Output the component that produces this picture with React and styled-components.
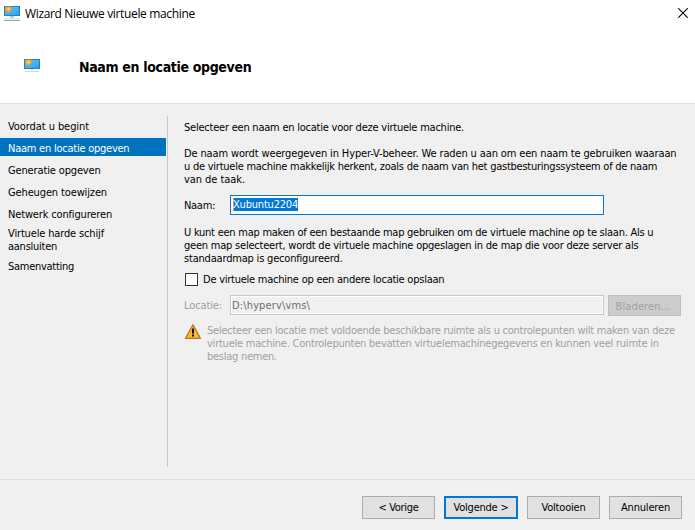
import React from 'react';
import styled, { createGlobalStyle } from 'styled-components';

const Global = createGlobalStyle`
  * { box-sizing: border-box; }
  body {
    margin: 0;
    background: #f0f0f0;
    color: #000;
    font: 11px/13px "DejaVu Sans Condensed", "DejaVu Sans", sans-serif;
    font-stretch: condensed;
    overflow: hidden;
  }
`;

const Window = styled.div`
  display: flex;
  flex-direction: column;
  width: 695px;
  height: 530px;
  background: #f0f0f0;
`;

const Top = styled.header`
  flex: none;
  height: 104px;
  background: #fff;
  border-bottom: 1px solid #dfdfdf;
`;

const TitleBar = styled.div`
  display: flex;
  height: 28px;
  padding: 0 7px 0 4px;
`;

const Caption = styled.span`
  flex: 1;
  margin: 5px 0 0 5px;
  font: 12px/17px "Open Sans", "Noto Sans", sans-serif;
  letter-spacing: -0.35px;
  white-space: nowrap;
`;

const TitleIcon = styled.svg`
  display: block;
  flex: none;
  width: 16px;
  height: 16px;
  margin-top: 5px;
`;

const CloseIcon = styled.svg`
  display: block;
  width: 10px;
  height: 10px;
  margin-top: 8px;
`;

const Heading = styled.div`
  display: flex;
  height: 75px;
  padding: 30px 0 0 24px;
`;

const HeadingIcon = styled.svg`
  display: block;
  width: 16px;
  height: 16px;
`;

const HeadingText = styled.h1`
  margin: 0 0 0 39px;
  font: bold 14px/18px "DejaVu Sans Condensed", "DejaVu Sans", sans-serif;
  font-stretch: condensed;
  letter-spacing: -0.34px;
  white-space: nowrap;
`;

const Body = styled.main`
  display: flex;
  height: 376px;
  border-bottom: 1px solid #dfdfdf;
`;

const Steps = styled.nav`
  width: 168px;
  height: 351px;
  margin-top: 12px;
  border-right: 1px solid #c8c8c8;
`;

const Step = styled.div`
  width: 166px;
  height: ${(p) => p.$height || 22}px;
  padding: ${(p) => p.$top ?? 4}px 0 0 8px;
`;

const ActiveStep = styled(Step)`
  height: 18px;
  margin-bottom: 4px;
  background: #0072c0;
  color: #fff;
`;

const Line = styled.span`
  display: block;
  height: 13px;
  letter-spacing: ${(p) => p.$track || 0}px;
  white-space: pre;
`;

const Form = styled.section`
  flex: none;
  width: 513px;
  padding: 17px 0 0 16px;
`;

const Paragraph = styled.p`
  margin: 0 0 ${(p) => p.$after || 0}px;
`;

const FieldRow = styled.div`
  display: flex;
  height: ${(p) => p.$height}px;
  color: ${(p) => (p.$disabled ? '#a0a0a0' : '#000')};
`;

const FieldLabel = styled.label`
  flex: none;
  width: 46px;
  padding-top: 4px;
`;

const Field = styled.div`
  display: flex;
  flex: none;
  align-items: flex-start;
  width: 374px;
  height: 20px;
  padding: 2px;
  border: 1px solid #0078d7;
  background: #fff;
`;

const DisabledField = styled(Field)`
  padding: 3px 1px 0;
  border-color: #c6c6c6;
  background: #f0f0f0;
  box-shadow: inset 0 0 0 1px #fff;
  color: #6d6d6d;
`;

const Selection = styled.span`
  width: 65px;
  height: 13px;
  background: #0078d7;
  box-shadow: inset 1px 0 0 #ff8728;
  color: #fff;
`;

const CheckRow = styled.label`
  display: flex;
  height: 22px;
  padding-left: 1px;
`;

const CheckBox = styled.span`
  width: 13px;
  height: 13px;
  margin: 0 5px 0 0;
  border: 1px solid #333;
  background: #fff;
`;

const Warning = styled.div`
  display: flex;
  color: #a0a0a0;
`;

const WarningIcon = styled.svg`
  display: block;
  flex: none;
  width: 18px;
  height: 17px;
  margin: -1px 5px 0 0;
`;

const Footer = styled.footer`
  display: flex;
  flex: 1;
  justify-content: flex-end;
  gap: 9px;
  padding: 16px 13px 0 0;
`;

const Button = styled.button`
  display: flex;
  flex: none;
  justify-content: center;
  width: ${(p) => (p.$primary ? 74 : 73)}px;
  height: 23px;
  padding: ${(p) => (p.$primary ? 3 : 4)}px 0 0;
  border: ${(p) => (p.$primary ? '2px solid #0078d7' : '1px solid #adadad')};
  background: #e1e1e1;
  color: #000;
  font: inherit;
`;

const BrowseButton = styled(Button)`
  height: 21px;
  margin-left: 4px;
  padding-right: 3px;
  border-color: #bfbfbf;
  background: #ccc;
  color: #a0a0a0;
`;

const Flare = () => (
  <>
    <path
      d="M4.5.4l1 1.6 1.9-.7-.6 1.9 1.7 1-1.7 1 .6 1.9-1.9-.6-1 1.6-1-1.6-1.9.6.6-1.9-1.7-1 1.7-1-.6-1.9 1.9.7z"
      fill="#f5a51d"
    />
    <circle cx="4.5" cy="4.2" r="1.4" fill="#ffcf60" />
  </>
);

const Screen = ({ id }) => (
  <>
    <defs>
      <linearGradient id={id} x1="0" y1="0" x2="1" y2="1">
        <stop offset="0" stopColor="#66c9ff" />
        <stop offset="1" stopColor="#1fa0f4" />
      </linearGradient>
    </defs>
    <rect x=".5" y="1.5" width="15" height="9" fill={`url(#${id})`} stroke="#2a7fae" />
  </>
);

export default function App() {
  return (
    <>
      <Global />
      <Window>
        <Top>
          <TitleBar>
            <TitleIcon viewBox="0 0 16 16">
              <Screen id="title-screen" />
              <path d="M6 11h4v2H6z" fill="#b9cbd6" />
              <path d="M3 13h10l3 1v1H0v-1z" fill="#e3eaee" />
              <path d="M0 15h16v1H0z" fill="#98a9b4" />
              <Flare />
            </TitleIcon>
            <Caption>Wizard Nieuwe virtuele machine</Caption>
            <CloseIcon viewBox="0 0 10 10">
              <path d="M.3.3l9.4 9.4M9.7.3L.3 9.7" stroke="#000" strokeWidth="1.1" />
            </CloseIcon>
          </TitleBar>
          <Heading>
            <HeadingIcon viewBox="0 0 16 16">
              <Screen id="heading-screen" />
              <path d="M7 11h2v1H7z" fill="#b9cbd6" />
              <path d="M1 13h14v1H1z" fill="#d0d8dd" />
              <Flare />
            </HeadingIcon>
            <HeadingText>Naam en locatie opgeven</HeadingText>
          </Heading>
        </Top>

        <Body>
          <Steps>
            <Step><Line $track={-0.077}>Voordat u begint</Line></Step>
            <ActiveStep><Line $track={-0.24}>Naam en locatie opgeven</Line></ActiveStep>
            <Step><Line $track={-0.14}>Generatie opgeven</Line></Step>
            <Step><Line $track={-0.131}>Geheugen toewijzen</Line></Step>
            <Step><Line $track={-0.158}>Netwerk configureren</Line></Step>
            <Step $height={30} $top={1}>
              <Line $track={-0.15}>Virtuele harde schijf</Line>
              <Line $track={-0.257}>aansluiten</Line>
            </Step>
            <Step><Line $track={-0.278}>Samenvatting</Line></Step>
          </Steps>

          <Form>
            <Paragraph $after={13}>
              <Line $track={-0.227}>Selecteer een naam en locatie voor deze virtuele machine.</Line>
            </Paragraph>
            <Paragraph $after={9}>
              <Line $track={-0.135}>De naam wordt weergegeven in Hyper-V-beheer. We raden u aan om een naam te gebruiken waaraan</Line>
              <Line $track={-0.245}>u de virtuele machine makkelijk herkent, zoals de naam van het gastbesturingssysteem of de naam</Line>
              <Line $track={-0.061}>van de taak.</Line>
            </Paragraph>
            <FieldRow $height={31}>
              <FieldLabel><Line $track={-0.301}>Naam:</Line></FieldLabel>
              <Field>
                <Selection><Line $track={-0.2}>Xubuntu2204</Line></Selection>
              </Field>
            </FieldRow>
            <Paragraph $after={8}>
              <Line $track={-0.245}>U kunt een map maken of een bestaande map gebruiken om de virtuele machine op te slaan. Als u</Line>
              <Line $track={-0.215}>geen map selecteert, wordt de virtuele machine opgeslagen in de map die voor deze server als</Line>
              <Line $track={-0.19}>standaardmap is geconfigureerd.</Line>
            </Paragraph>
            <CheckRow>
              <CheckBox />
              <Line $track={-0.24}>De virtuele machine op een andere locatie opslaan</Line>
            </CheckRow>
            <FieldRow $height={29} $disabled>
              <FieldLabel><Line $track={-0.116}>Locatie:</Line></FieldLabel>
              <DisabledField><Line $track={0.14}>D:\hyperv\vms\</Line></DisabledField>
              <BrowseButton disabled><Line $track={0.128}>Bladeren...</Line></BrowseButton>
            </FieldRow>
            <Warning>
              <WarningIcon viewBox="0 0 18 17">
                <path d="M9 1.7L16.4 15.3H1.6z" fill="#fdb833" stroke="#b8741a" strokeWidth="1.3" strokeLinejoin="round" />
                <path d="M8 5.5h2v5H8zM8 11.5h2v2H8z" fill="#111" />
              </WarningIcon>
              <div>
                <Line $track={-0.25}>Selecteer een locatie met voldoende beschikbare ruimte als u controlepunten wilt maken van deze</Line>
                <Line $track={-0.235}>virtuele machine. Controlepunten bevatten virtuelemachinegegevens en kunnen veel ruimte in</Line>
                <Line $track={-0.253}>beslag nemen.</Line>
              </div>
            </Warning>
          </Form>
        </Body>

        <Footer>
          <Button><Line $track={-0.324}>&lt; Vorige</Line></Button>
          <Button $primary><Line $track={-0.218}>Volgende &gt;</Line></Button>
          <Button><Line $track={-0.202}>Voltooien</Line></Button>
          <Button><Line $track={-0.18}>Annuleren</Line></Button>
        </Footer>
      </Window>
    </>
  );
}
